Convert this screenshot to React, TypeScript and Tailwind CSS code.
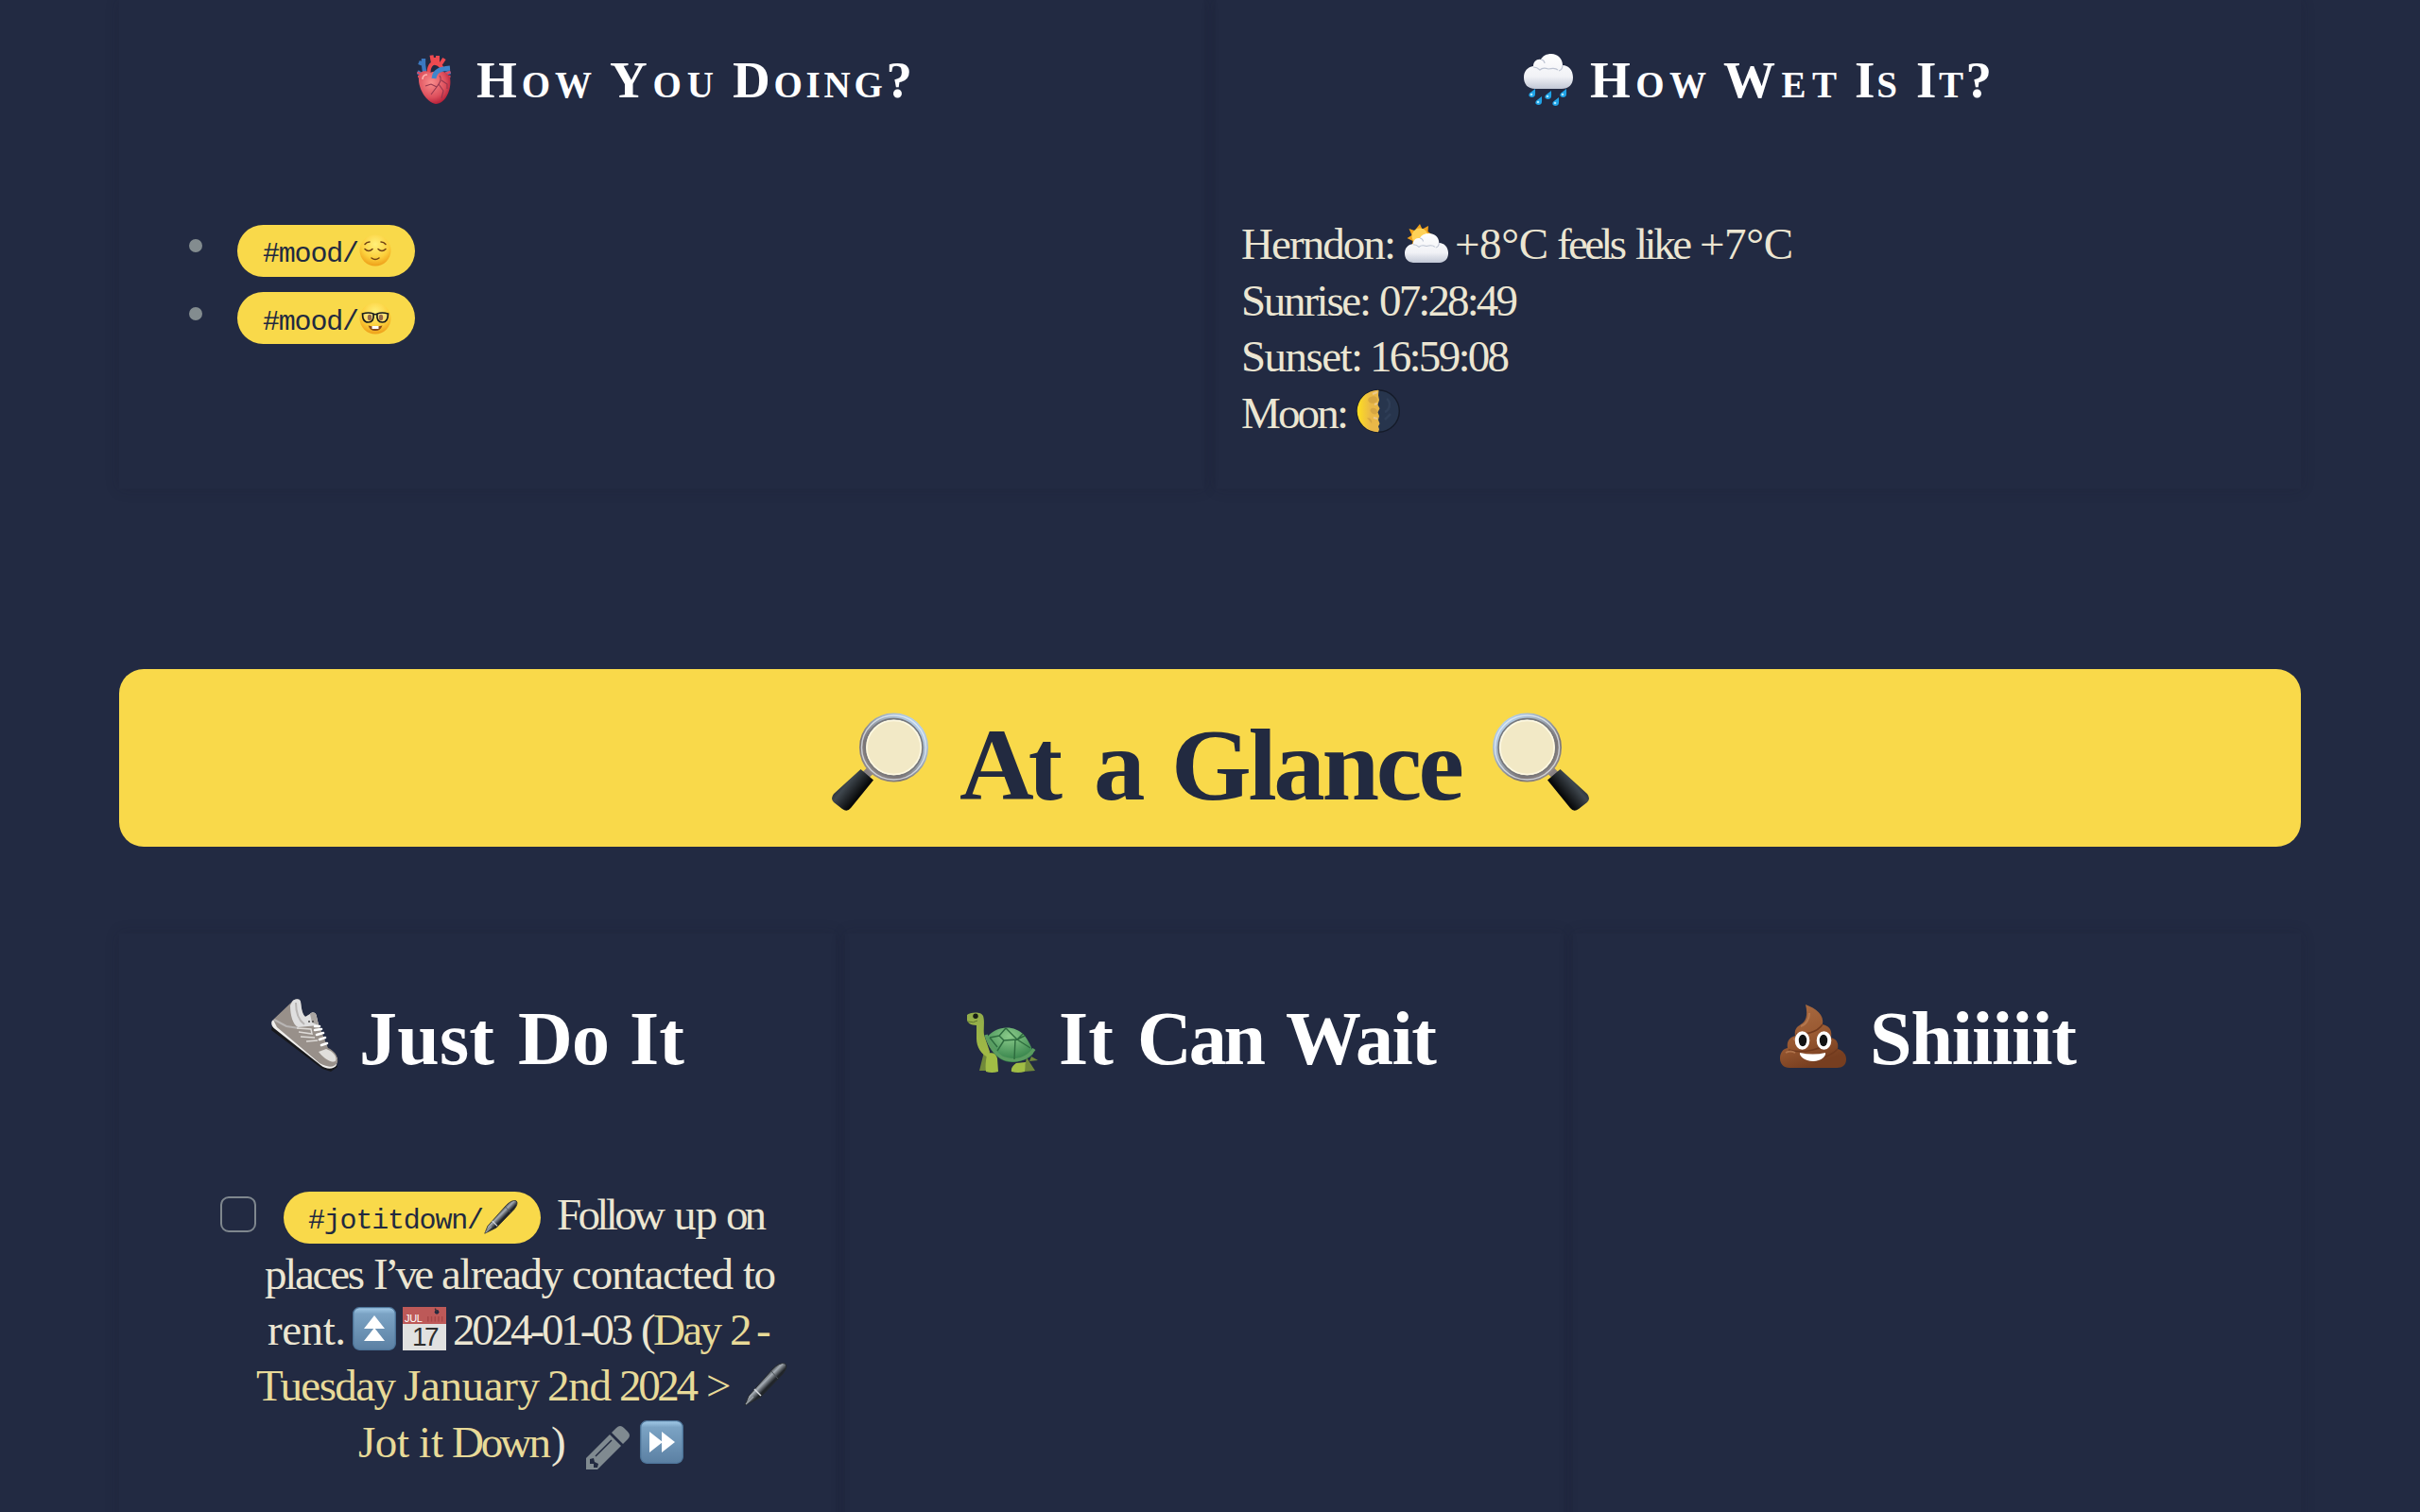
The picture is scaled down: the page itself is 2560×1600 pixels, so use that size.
import { useLayoutEffect, useRef } from "react";
import type { ReactNode } from "react";

/** A word whose tracking is set so that it fills the width of its box. */
function Word({ className = "", children }: { className?: string; children: string }) {
  const box = useRef<HTMLSpanElement>(null);
  const ink = useRef<HTMLSpanElement>(null);
  useLayoutEffect(() => {
    if (!box.current || !ink.current || children.length < 2) return;
    ink.current.style.letterSpacing = "0px";
    const extra = box.current.clientWidth - ink.current.getBoundingClientRect().width;
    ink.current.style.letterSpacing = `${extra / (children.length - 1)}px`;
  }, [children]);
  return (
    <span ref={box} className={`block shrink-0 whitespace-nowrap ${className}`}>
      <span ref={ink}>{children}</span>
    </span>
  );
}

function Line({ className = "", children }: { className?: string; children: ReactNode }) {
  return <div className={`flex items-start text-[47px] leading-[61px] ${className}`}>{children}</div>;
}

function Heart({ className }: { className: string }) {
  return (
    <svg viewBox="0 0 36 52" className={className}>
      <defs>
        <radialGradient id="heart" cx="0.4" cy="0.35" r="0.75">
          <stop offset="0" stopColor="#f98d8c" />
          <stop offset="0.6" stopColor="#dd4f5c" />
          <stop offset="1" stopColor="#a90f2c" />
        </radialGradient>
      </defs>
      <path d="M8 18 7 10 2 8M7 10V4M0.5 18l6 4M35.5 18l-5 2" fill="none" stroke="#3b78c0" strokeWidth="4.4" />
      <path d="M0.5 18.5 6 21M35.5 18 30 20M1 23l5 0M35.5 23l-4 0" stroke="#e04a5e" strokeWidth="2.4" />
      <path d="M13 24C11 12 16 8 20 9c5 1 6 4 7 6M17 9 15.500 .5M22 9 22 1M25 10l4-6M19 9l-1-6" fill="none" stroke="#ee4a50" strokeWidth="4" />
      <path d="M2 24C2 18 8 15 14 19c6-3 18-3 21 5 2 10-3 27-15 28C9 50 1 34 2 24Z" fill="url(#heart)" />
      <path d="M18 25c1-8 6-10 17-11" fill="none" stroke="#3f86cc" strokeWidth="5" />
      <path d="M24 22c3 4 0 8-3 12l-6 8M23 31l5 7-2 8M21 34l-6-3-6 2M26 27l6 4v5" fill="none" stroke="#96374f" strokeWidth="1.1" />
      <path d="M6 26c0-3 2-5 5-5" fill="none" stroke="#fdb3ae" strokeWidth="1.500" />
    </svg>
  );
}

function CloudShape() {
  return (
    <>
      <path d="M12 37C4 37 0 32 0 25s4-11 10-12C10 8 14 5 18 6c2-4 6-6 11-6 7 0 12 5 12 12 6 0 11 5 11 13s-5 12-12 12Z" fill="url(#cloud)" />
      <path d="M10 14c3 0 5 1 7 3 2-2 6-2 9-1 4-1 8-1 10 1M41 12c0 3-1 5-4 6M18 6c2 0 4 2 4 4" fill="none" stroke="#bcc3d2" strokeWidth="1.200" />
    </>
  );
}

function CloudGradient() {
  return (
    <linearGradient id="cloud" x1="0" y1="0" x2="0" y2="1">
      <stop offset="0" stopColor="#ffffff" />
      <stop offset="0.65" stopColor="#f1f2f6" />
      <stop offset="1" stopColor="#c2c8d6" />
    </linearGradient>
  );
}

function RainCloud({ className }: { className: string }) {
  const drops = [
    [7, 39],
    [24, 41],
    [40, 39],
    [14, 47],
    [32, 48],
  ];
  return (
    <svg viewBox="0 0 52 56" className={className}>
      <defs>
        <CloudGradient />
      </defs>
      <CloudShape />
      {drops.map(([x, y]) => (
        <path key={x} d={`M${x + 5} ${y - 2}c0 5 1 9-3.500 9-4 0-4-4-1-5.500Z`} fill="#1fa2e6" />
      ))}
      {drops.map(([x, y]) => (
        <circle key={x} cx={x + 1} cy={y + 4} r="1.300" fill="#a8e8ff" />
      ))}
    </svg>
  );
}

function SunCloud({ className }: { className: string }) {
  return (
    <svg viewBox="0 0 46 41" className={className}>
      <defs>
        <CloudGradient />
      </defs>
      <path d="M16 0l2.500 5.500L25 2l-.5 6 4 3-3 4 2 6-5 0-4 4-4-3-7 2 1-6-6-3 5-3-3-7 6 2Z" fill="#f0a21c" />
      <circle cx="16" cy="13" r="8.500" fill="#ffd257" />
      <g transform="translate(0 10) scale(.885 .84)">
        <CloudShape />
      </g>
    </svg>
  );
}

function Moon({ className }: { className: string }) {
  return (
    <svg viewBox="0 0 46 46" className={className}>
      <defs>
        <linearGradient id="moonlit" x1="0" y1="0" x2="1" y2="0">
          <stop offset="0" stopColor="#ffe01f" />
          <stop offset="0.6" stopColor="#e9b848" />
        </linearGradient>
      </defs>
      <circle cx="23" cy="23" r="22.300" fill="#27354d" stroke="#151b29" strokeWidth="1.400" />
      <path d="M32 10c5 4 3 12-2 14M30 32l6-6" fill="none" stroke="#2f3e57" strokeWidth="2.500" />
      <path d="M23 .7A22.300 22.300 0 0 0 23 45.300l1-3-1-3 1.500-3-1.500-4 1-4-1.500-4 2-4-2-4 1.500-5-1-5 .5-5Z" fill="url(#moonlit)" />
      <path d="M15 8c4-2 7 0 7 3s-5 5-8 3-2-5 1-6ZM16 20c3-1 6 1 6 4s-4 3-6 1-2-4 0-5ZM11 30c4 0 6 3 5 6" fill="#b98a39" fillOpacity=".38" />
      <path d="M17 5l5-2M19 16l3-1M18 30l4 1" stroke="#ecc98a" strokeWidth="2" />
    </svg>
  );
}

function Magnifier({ id, className }: { id: string; className: string }) {
  return (
    <svg viewBox="0 0 102 104" className={className}>
      <defs>
        <linearGradient id={`${id}-rim`} x1="1" y1="0" x2="0" y2="1">
          <stop offset="0" stopColor="#bcdcfb" />
          <stop offset="0.35" stopColor="#a3b1c0" />
          <stop offset="0.7" stopColor="#7c7575" />
          <stop offset="1" stopColor="#9d9696" />
        </linearGradient>
        <linearGradient id={`${id}-grip`} x1="0" y1="0" x2="1" y2="0.8">
          <stop offset="0.1" stopColor="#0b0e10" />
          <stop offset="0.4" stopColor="#3f474e" />
          <stop offset="0.7" stopColor="#090a0b" />
        </linearGradient>
      </defs>
      <path d="M32 70l8-8" stroke="#8a8283" strokeWidth="9" />
      <path d="M30.500 60 44 71.500 20 101q-4 5-9 1L2 95q-4-4 0-9Z" fill={`url(#${id}-grip)`} />
      <circle cx="65.500" cy="37" r="33" fill="#f2e9c6" stroke={`url(#${id}-rim)`} strokeWidth="7" />
      <circle cx="65.500" cy="37" r="34" fill="none" stroke="#e9f1f8" strokeWidth="1.500" strokeOpacity=".7" />
      <circle cx="65.500" cy="37" r="30.500" fill="none" stroke="#77777a" strokeWidth="1.500" />
      <circle cx="65.500" cy="37" r="28.500" fill="none" stroke="#fdf8e2" strokeWidth="1.500" />
    </svg>
  );
}

function Shoe({ className }: { className: string }) {
  return (
    <svg viewBox="0 0 71 77" className={className}>
      <path d="M2 24 0 33l54 41 9 3 7-5-3-6Z" fill="#17181c" />
      <path d="M1 23c-2 3 0 7 3 9l48 38c6 5 14 5 17 0l1-8L60 66 4 21Z" fill="#efeeec" />
      <path d="M2 22 22 3c2-3 8-4 9 0 1 6 1 12 5 16l5-3c3-3 7-1 7 3l2 8 10 25c7 3 11 9 10 15-3 7-12 5-19 1L6 30Z" fill="#98908a" />
      <path d="M20 7 22 3c2-3 8-4 9 0 1 6 1 12 5 16l5-3c3-3 7-1 7 3l2 9-22 2c-5-3-8-12-8-23Z" fill="#dfdfe0" />
      <path d="M41 16c3-3 7-1 7 3l2 9-7-3Z" fill="#aaa5a1" />
      <path d="M26 4c0 10 2 18 9 23M3 22l13 7 13 2" fill="none" stroke="#b8b5b4" strokeWidth="2" />
      <path d="M50 56l8-3c8 3 12 8 10 14-5 0-12-3-18-11Z" fill="#e1dfdc" />
      <path d="M60 66c4 2 8 1 9-2-1 6-6 9-12 6Z" fill="#98908a" />
      <path d="M27 31l15 1 1 5-14-2M31 40l15 1M37 45l12-1" fill="none" stroke="#dedbd8" strokeWidth="1.500" />
      <path d="M46 29h5M46 33l7-1M48 38l7-2M51 43l6-2M53 49l6-2" stroke="#ffffff" strokeWidth="2.600" strokeLinecap="round" />
      <circle cx="40" cy="24" r="1" fill="#444" />
      <circle cx="44" cy="24" r="1" fill="#444" />
    </svg>
  );
}

function Turtle({ className }: { className: string }) {
  return (
    <svg viewBox="0 0 77 64" className={className}>
      <defs>
        <radialGradient id="shell" cx="0.5" cy="0.25" r="0.7">
          <stop offset="0" stopColor="#8acb8a" />
          <stop offset="1" stopColor="#35824a" />
        </radialGradient>
        <linearGradient id="skin" x1="0" y1="0" x2="0" y2="1">
          <stop offset="0" stopColor="#92ac4a" />
          <stop offset="1" stopColor="#a2bb45" />
        </linearGradient>
      </defs>
      <path d="M19 42l-5 20h10l8-18ZM64 48l9 14-12 1ZM69 47l7 4-9 1Z" fill="#71893a" />
      <path d="M1 3C4 0 16-1 18 4c2 6 0 14 1 20l6 18-1 6c-8-3-13-11-13-20V14C5 14 1 11 1 8Z" fill="url(#skin)" />
      <path d="M22 27C31 14 51 13 61 24c5 6 9 14 10 20-6 8-24 12-34 6C29 45 24 38 20 25Z" fill="url(#shell)" />
      <path d="M21 24c4 13 12 22 19 25 12 4 25 1 32-10" fill="none" stroke="#5a9c60" strokeWidth="3.500" />
      <path d="M25 27l10-2 7-8M35 25l5 5 14-1 8-4M52 29l-1 21M40 30l-7 11M42 17l12 12M54 29l14 9M60 23l-6 6M25 27l8 10" fill="none" stroke="#2d6b3e" strokeWidth="1.400" />
      <path d="M22 45c5-3 10-1 11 4l1 14q-7 2-13 0c-1-6 0-12 1-18ZM53 54l10-1-1 10q-7 2-14 0c-1-4 2-7 5-9Z" fill="#a1bd45" />
      <circle cx="10" cy="4.200" r="2.700" fill="#171c15" />
      <path d="M2 10q6 2 10-1" fill="none" stroke="#5e742f" />
    </svg>
  );
}

function Poop({ className }: { className: string }) {
  return (
    <svg viewBox="0 0 70 67" className={className}>
      <defs>
        <linearGradient id="poop" x1="0" y1="0" x2="0.4" y2="1">
          <stop offset="0" stopColor="#ab6d43" />
          <stop offset="0.6" stopColor="#985831" />
          <stop offset="1" stopColor="#773e20" />
        </linearGradient>
      </defs>
      <path d="M27 0c11 4 20 11 18 21 9 2 10 8 9 14 7 2 8 7 7 12 6 2 9 6 9 11 0 6-4 9-10 9H10C4 67 0 63 0 57c0-6 3-10 8-11-1-6 1-11 8-13-1-6 1-9 6-12 5-3 8-9 5-21Z" fill="url(#poop)" />
      <path d="M17 31c9 1 22-1 28-10M9 48c16 4 38 0 45-12M37 61c8-6 17-6 24-14" fill="none" stroke="#713a1e" strokeWidth="1.600" />
      <path d="M22 23c6-2 9-8 9-14M14 37q4-3 9-3M6 51q5-3 10 0" fill="none" stroke="#bd8158" strokeWidth="2" strokeOpacity=".7" />
      <ellipse cx="23.500" cy="38" rx="7.800" ry="9.800" fill="#fff" />
      <ellipse cx="46.500" cy="38" rx="7.800" ry="9.800" fill="#fff" />
      <ellipse cx="24" cy="38" rx="4.200" ry="6.200" fill="#121314" />
      <ellipse cx="46" cy="38" rx="4.200" ry="6.200" fill="#121314" />
      <path d="M21 51q14 3 27 0c1 3-4 9-13 9s-15-6-14-9Z" fill="#fff" />
    </svg>
  );
}

function FaceBase() {
  return (
    <>
      <defs>
        <radialGradient id="face" cx="0.5" cy="0.3" r="0.75">
          <stop offset="0" stopColor="#fff07a" />
          <stop offset="0.6" stopColor="#fccf3b" />
          <stop offset="1" stopColor="#eb9512" />
        </radialGradient>
      </defs>
      <circle cx="17" cy="17" r="16.500" fill="url(#face)" />
    </>
  );
}

function Relieved({ className }: { className: string }) {
  return (
    <svg viewBox="0 0 34 34" className={className}>
      <FaceBase />
      <path d="M6 15.500q4 4 8 0M20 15.500q4 4 8 0M13 25q4 3 8 0M6 10.500q2-2.500 5-2.500M28 10.500q-2-2.500-5-2.500" fill="none" stroke="#704114" strokeWidth="1.500" strokeLinecap="round" />
    </svg>
  );
}

function Nerd({ className }: { className: string }) {
  return (
    <svg viewBox="0 0 34 34" className={className}>
      <FaceBase />
      <ellipse cx="11" cy="16" rx="2.200" ry="3.200" fill="#80451a" />
      <ellipse cx="23" cy="16" rx="2.200" ry="3.200" fill="#80451a" />
      <path d="M3.500 12q6.500-2 11.500 0 1 9-5.500 9c-5 0-6-4-6-9ZM19 12q5-2 11.500 0 0 9-6 9-6.500 0-5.500-9ZM15 13q2-1 4 0" fill="#fff" fillOpacity=".2" stroke="#171a1b" strokeWidth="1.700" />
      <path d="M9.500 24.500q7.500 2 15 0-2 5.500-7.500 5.500t-7.500-5.500Z" fill="#8a4a18" />
      <path d="M13.500 25h7v3h-7Z" fill="#fff" />
    </svg>
  );
}

function Pen({ id, className }: { id: string; className: string }) {
  return (
    <svg viewBox="0 0 46 46" className={className}>
      <defs>
        <linearGradient id={id} x1="0.35" y1="0.35" x2="0.62" y2="0.62">
          <stop offset="0.1" stopColor="#2b3036" />
          <stop offset="0.4" stopColor="#a5acb3" />
          <stop offset="0.75" stopColor="#202429" />
        </linearGradient>
      </defs>
      <path d="M1 45 5 35 30 7Q38-1 43.500 1q3.500 3-2.500 11L17 37Z" fill={`url(#${id})`} stroke="#25292e" strokeWidth="1" />
      <path d="M11 28l7 7" stroke="#d7dade" strokeWidth="1.500" />
      <path d="M29 9l7 8" stroke="#4b5157" strokeWidth="1" />
      <path d="M2 44l8-8" stroke="#9aa0a5" strokeWidth="1.300" />
    </svg>
  );
}

function ArrowKey({ up = false, className }: { up?: boolean; className: string }) {
  return (
    <svg viewBox="0 0 46 46" className={className}>
      <defs>
        <linearGradient id="key" x1="0" y1="0" x2="0" y2="1">
          <stop offset="0" stopColor="#a3cbe9" />
          <stop offset="0.15" stopColor="#7ba3c4" />
          <stop offset="1" stopColor="#5b80a3" />
        </linearGradient>
      </defs>
      <rect x=".7" y=".7" width="44.600" height="44.600" rx="6.500" fill="url(#key)" stroke="#4d7499" strokeWidth="1.300" />
      {up ? (
        <path d="M23 9 34 23H12ZM23 22 34 36H12Z" fill="#fff" />
      ) : (
        <path d="M10 12 24 23 10 34ZM23 12 37 23 23 34Z" fill="#fff" />
      )}
    </svg>
  );
}

function Calendar({ className }: { className: string }) {
  return (
    <div className={`flex flex-col overflow-hidden bg-[#e1e1e0] font-['Liberation_Sans'] ${className}`}>
      <div className="flex h-[18px] shrink-0 items-end gap-[3px] bg-[#bd5958] pl-[2px]">
        <span className="text-[11px] leading-[11px] tracking-[-0.3px] text-white">JUL</span>
        <svg viewBox="0 0 24 17" className="h-[17px] w-[24px]">
          <path d="M3 9v6M7 9v6M11 9v6M15 9v6M19 9v6" stroke="#a74747" strokeWidth="1.500" />
          <circle cx="13" cy="4" r="2.500" fill="#222a40" />
          <path d="M13 4 11 0" stroke="#3b3238" strokeWidth="1.500" />
        </svg>
      </div>
      <div className="text-center text-[28px] leading-[28px] tracking-[-2.500px] text-[#2e2e2e]">17</div>
    </div>
  );
}

function Pencil({ className }: { className: string }) {
  return (
    <svg viewBox="0 0 46 46" className={className}>
      <path d="M0 46V34L25 9 37 21 12 46Z" fill="#808a90" />
      <path d="M27 7l5-5q4-4 8 0l4 4q4 4 0 8l-5 5Z" fill="#808a90" />
      <path d="M4 35v5h4v4h4l1-4-4-2-1-4Z" fill="#222a40" />
      <path d="M10 32 27 15" stroke="#222a40" strokeWidth="1.500" />
    </svg>
  );
}

function Tag({ className = "", children }: { className?: string; children: ReactNode }) {
  return (
    <div
      className={`flex h-[55px] shrink-0 items-start rounded-full bg-[#f9d94a] font-['Liberation_Mono',monospace] text-[30px] leading-[55px] text-[#222a40] ${className}`}
    >
      {children}
    </div>
  );
}

const card = "shrink-0 shadow-[0_0_14px_rgba(26,26,44,0.2)]";

export default function App() {
  return (
    <main className="flex h-[1600px] w-[2560px] flex-col overflow-hidden bg-[#222a42] px-[126px] font-['Liberation_Serif',serif] text-[#ece6d2]">
      <div className="flex h-[517px] shrink-0 gap-[12px]">
        <section className={`w-[1148px] pt-[54px] ${card}`}>
          <h3 className="flex h-[60px] items-start pl-[315px] text-[55px] leading-[62px] font-bold text-white [font-variant:small-caps]">
            <Heart className="mt-[4px] h-[52px] w-[36px]" />
            <Word className="ml-[27px] w-[122px]">How</Word>
            <Word className="ml-[19px] w-[110px]">You</Word>
            <Word className="ml-[20px] w-[190px]">Doing?</Word>
          </h3>
          <ul className="mt-[124px] flex flex-col gap-[16px] pl-[74px]">
            <li className="flex items-start">
              <span className="mt-[15px] size-[14px] rounded-full bg-[#838c8f]" />
              <Tag className="ml-[37px] w-[188px] pl-[27px]">
                <Word className="mt-[4px] w-[102px]">#mood/</Word>
                <Relieved className="mt-[10px] size-[34px]" />
              </Tag>
            </li>
            <li className="flex items-start">
              <span className="mt-[16px] size-[14px] rounded-full bg-[#838c8f]" />
              <Tag className="ml-[37px] w-[188px] pl-[27px]">
                <Word className="mt-[5px] w-[102px]">#mood/</Word>
                <Nerd className="mt-[11px] size-[34px]" />
              </Tag>
            </li>
          </ul>
        </section>

        <section className={`w-[1148px] pt-[54px] ${card}`}>
          <h3 className="flex h-[60px] items-start pl-[326px] text-[55px] leading-[62px] font-bold text-white [font-variant:small-caps]">
            <RainCloud className="mt-[3px] h-[56px] w-[52px]" />
            <Word className="ml-[18px] w-[123px]">How</Word>
            <Word className="ml-[18px] w-[120px]">Wet</Word>
            <Word className="ml-[19px] w-[45px]">Is</Word>
            <Word className="ml-[20px] w-[80px]">It?</Word>
          </h3>
          <div className="mt-[114px] pl-[27px]">
            <Line className="h-[59.5px]">
              <Word className="w-[164px]">Herndon:</Word>
              <SunCloud className="mt-[9px] ml-[9px] h-[41px] w-[46px]" />
              <Word className="ml-[7px] w-[99px]">+8°C</Word>
              <Word className="ml-[9px] w-[74px]">feels</Word>
              <Word className="ml-[9px] w-[60px]">like</Word>
              <Word className="ml-[8px] w-[99px]">+7°C</Word>
            </Line>
            <Line className="h-[59.5px]">
              <Word className="w-[138px]">Sunrise:</Word>
              <Word className="ml-[8px] w-[147px]">07:28:49</Word>
            </Line>
            <Line className="h-[59.5px]">
              <Word className="w-[129px]">Sunset:</Word>
              <Word className="ml-[7px] w-[148px]">16:59:08</Word>
            </Line>
            <Line className="h-[59.5px]">
              <Word className="w-[114px]">Moon:</Word>
              <Moon className="mt-[5px] ml-[8px] size-[46px]" />
            </Line>
          </div>
        </section>
      </div>

      <h1 className="mt-[191px] flex h-[188px] shrink-0 items-start rounded-[26px] bg-[#f9d94a] pl-[754px] text-[109px] leading-[188px] font-bold text-[#222a40]">
        <Magnifier id="lens-left" className="mt-[46px] h-[104px] w-[102px]" />
        <Word className="mt-[8px] ml-[33px] w-[109px]">At</Word>
        <Word className="mt-[8px] ml-[33px] w-[52px]">a</Word>
        <Word className="mt-[8px] ml-[30px] w-[310px]">Glance</Word>
        <Magnifier id="lens-right" className="mt-[46px] ml-[30px] h-[104px] w-[102px] -scale-x-100" />
      </h1>

      <div className="mt-[92px] flex h-[700px] shrink-0 gap-[10px]">
        <section className={`w-[758px] pt-[64px] ${card}`}>
          <h2 className="flex h-[90px] items-start pl-[161px] text-[80px] leading-[94px] font-bold text-white">
            <Shoe className="mt-[5px] h-[77px] w-[71px]" />
            <Word className="ml-[22px] w-[143px]">Just</Word>
            <Word className="ml-[25px] w-[97px]">Do</Word>
            <Word className="ml-[21px] w-[58px]">It</Word>
          </h2>
          <div className="mt-[113px]">
            <Line className="h-[63px] pl-[107px]">
              <span className="mt-[11px] size-[38px] shrink-0 rounded-[9px] border-2 border-[#7f878e]" />
              <Tag className="mt-[6px] ml-[29px] w-[272px] pl-[26px]">
                <Word className="mt-[4px] w-[186px]">#jotitdown/</Word>
                <Pen id="pen-tag" className="mt-[9px] size-[36px]" />
              </Tag>
              <Word className="ml-[17px] w-[115px]">Follow</Word>
              <Word className="ml-[9px] w-[46px]">up</Word>
              <Word className="ml-[9px] w-[43px]">on</Word>
            </Line>
            <Line className="h-[59px] pl-[154px]">
              <Word className="w-[106px]">places</Word>
              <Word className="ml-[9px] w-[64px]">I’ve</Word>
              <Word className="ml-[8px] w-[129px]">already</Word>
              <Word className="ml-[9px] w-[171px]">contacted</Word>
              <Word className="ml-[10px] w-[35px]">to</Word>
            </Line>
            <Line className="h-[59px] pl-[157px]">
              <Word className="w-[83px]">rent.</Word>
              <ArrowKey up className="mt-[6px] ml-[7px] size-[46px]" />
              <Calendar className="mt-[6px] ml-[7px] size-[46px]" />
              <Word className="ml-[7px] w-[191px]">2024-01-03</Word>
              <Word className="ml-[8px] w-[13px]">(</Word>
              <Word className="w-[73px] text-[#e8da98]">Day</Word>
              <Word className="ml-[8px] w-[21px] text-[#e8da98]">2</Word>
              <Word className="ml-[7px] w-[13px] text-[#e8da98]">-</Word>
            </Line>
            <Line className="h-[60px] pl-[145px] text-[#e8da98]">
              <Word className="w-[148px]">Tuesday</Word>
              <Word className="ml-[8px] w-[144px]">January</Word>
              <Word className="ml-[8px] w-[68px]">2nd</Word>
              <Word className="ml-[8px] w-[84px]">2024</Word>
              <Word className="ml-[8px] w-[28px]">&gt;</Word>
              <Pen id="pen-link" className="mt-[6px] ml-[12px] size-[46px]" />
            </Line>
            <Line className="h-[59px] pl-[253px]">
              <Word className="w-[54px] text-[#e8da98]">Jot</Word>
              <Word className="ml-[10px] w-[26px] text-[#e8da98]">it</Word>
              <Word className="ml-[9px] w-[105px] text-[#e8da98]">Down</Word>
              <Word className="w-[14px]">)</Word>
              <Pencil className="mt-[13px] ml-[23px] size-[46px]" />
              <ArrowKey className="mt-[7px] ml-[11px] size-[46px]" />
            </Line>
          </div>
        </section>

        <section className={`w-[760px] pt-[64px] ${card}`}>
          <h2 className="flex h-[90px] items-start pl-[128px] text-[80px] leading-[94px] font-bold text-white">
            <Turtle className="mt-[19px] h-[64px] w-[77px]" />
            <Word className="ml-[21px] w-[58px]">It</Word>
            <Word className="ml-[25px] w-[136px]">Can</Word>
            <Word className="ml-[21px] w-[160px]">Wait</Word>
          </h2>
        </section>

        <section className={`w-[770px] pt-[64px] ${card}`}>
          <h2 className="flex h-[90px] items-start pl-[219px] text-[80px] leading-[94px] font-bold text-white">
            <Poop className="mt-[11px] h-[67px] w-[70px]" />
            <Word className="ml-[25px] w-[219px]">Shiiiiit</Word>
          </h2>
        </section>
      </div>
    </main>
  );
}
